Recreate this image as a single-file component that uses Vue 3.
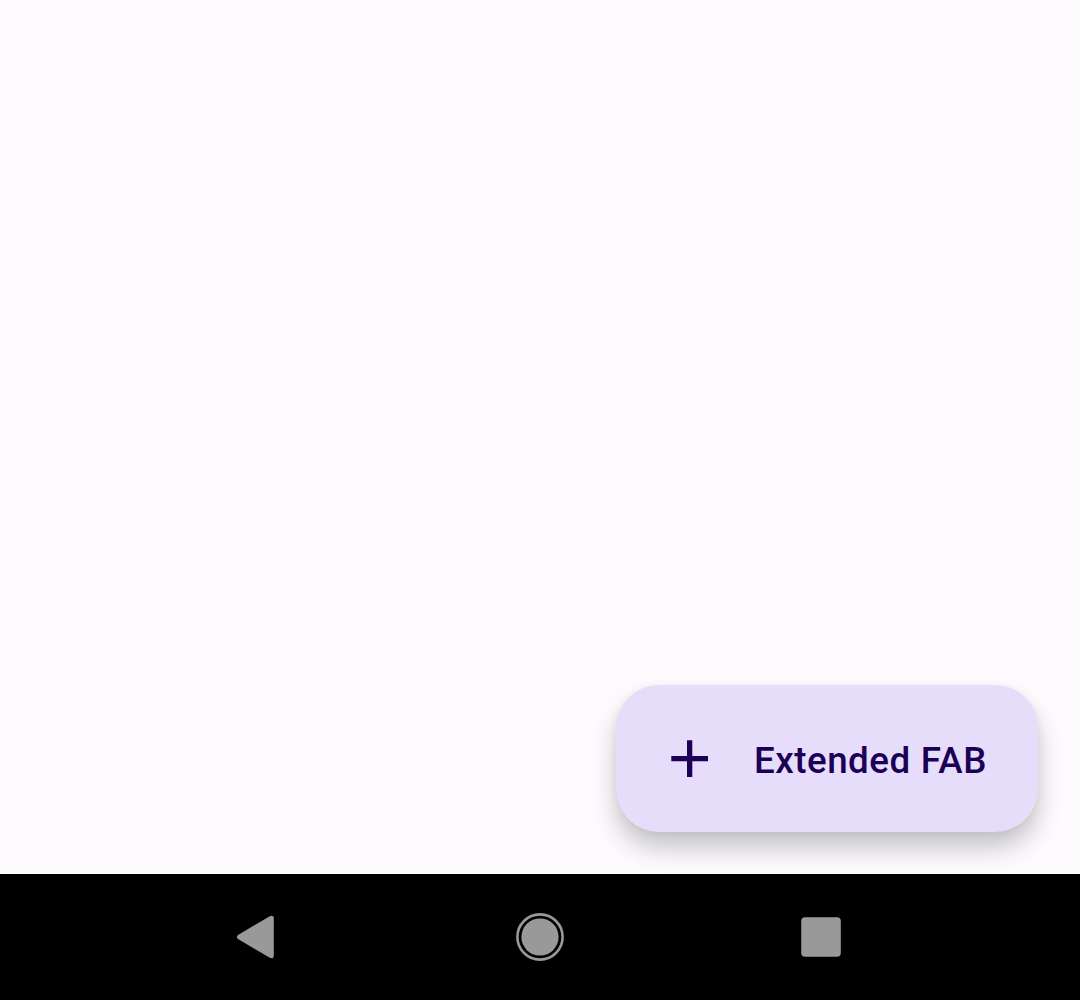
<script setup>
</script>

<template>
  <div class="screen">
    <main class="content">
      <button class="fab" type="button">
        <svg class="plus" viewBox="0 0 37 37" aria-hidden="true">
          <path d="M16 .3h5.3V16H37v5.3H21.3V37H16V21.3H.3V16H16z" />
        </svg>
        <span class="label">Extended FAB</span>
      </button>
    </main>
    <nav class="navbar">
      <svg viewBox="0 0 60 60" aria-label="Back">
        <path d="M13 30Q10.6 32 13 34L44.8 52.8Q48.8 54.3 48.8 50.5V13.5Q48.8 9.7 44.8 11.2Z" />
      </svg>
      <svg viewBox="0 0 60 60" aria-label="Home">
        <circle cx="30" cy="32" r="18.6" />
        <circle class="ring" cx="30" cy="32" r="22.6" />
      </svg>
      <svg viewBox="0 0 60 60" aria-label="Overview">
        <rect x="6.2" y="12.2" width="39.6" height="39.6" rx="3.8" />
      </svg>
    </nav>
  </div>
</template>

<style>
body {
  margin: 0;
}
</style>

<style scoped>
.screen {
  display: flex;
  flex-direction: column;
  width: 1080px;
  height: 1000px;
  overflow: hidden;
  background: #fdfbfe;
  font-family: Roboto, sans-serif;
}
.content {
  flex: 1;
  display: flex;
  align-items: flex-end;
  justify-content: flex-end;
  padding: 0 42px 42px 0;
}
.fab {
  display: flex;
  align-items: center;
  box-sizing: border-box;
  width: 422px;
  height: 147px;
  padding: 0 0 0 55px;
  border: 0;
  border-radius: 43px;
  background: #e5ddfa;
  color: #1c0056;
  font: 500 36.75px/48px Roboto, sans-serif;
  box-shadow: 0 16px 26px rgba(0, 0, 0, 0.22), 0 2px 10px rgba(0, 0, 0, 0.05);
}
.plus {
  width: 37px;
  height: 37px;
  fill: currentColor;
}
.label {
  margin-left: 46px;
  padding-top: 4px;
  letter-spacing: 0.5px;
  word-spacing: 0.4px;
  white-space: nowrap;
}
.navbar {
  display: flex;
  align-items: center;
  justify-content: space-between;
  box-sizing: border-box;
  height: 126px;
  padding: 0 225px 4px;
  background: #000;
}
.navbar svg {
  width: 60px;
  height: 60px;
  fill: #999;
}
.navbar .ring {
  fill: none;
  stroke: #999;
  stroke-width: 2.6;
}
</style>
